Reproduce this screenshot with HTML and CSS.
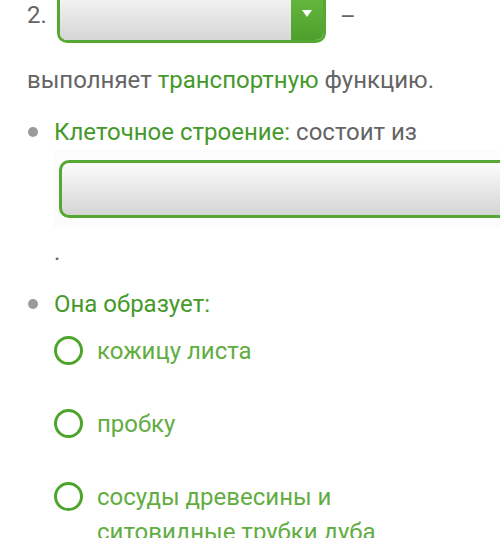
FILE: index.html
```html
<!DOCTYPE html>
<html>
<head>
	<meta charset="UTF-8">
	<title>Ткани растений</title>
	<link rel="stylesheet" href="styles.css">
</head>
<body>
	<div class="warp">
		<div class="q-row">
			<span class="num">2.</span>
			<div class="sel">
				<div class="sel-box"></div>
				<div class="sel-btn"><span class="arr"></span></div>
			</div>
			<span class="dash">–</span>
		</div>
		<p class="txt">выполняет <span class="grn">транспортную</span> функцию.</p>

		<ul class="list">
			<li>
				<p class="txt"><span class="grn">Клеточное строение:</span> состоит из</p>
				<div class="inp-wrap">
					<div class="inp"></div>
				</div>
				<p class="txt dot">.</p>
			</li>
			<li>
				<p class="txt"><span class="grn">Она образует:</span></p>
				<div class="radios">
					<label class="rad"><span class="circ"></span><span class="lbl">кожицу листа</span></label>
					<label class="rad"><span class="circ"></span><span class="lbl">пробку</span></label>
					<label class="rad"><span class="circ"></span><span class="lbl">сосуды древесины и ситовидные трубки дуба</span></label>
				</div>
			</li>
		</ul>
	</div>
</body>
</html>
```
FILE: styles.css
```css
body{
	margin: 0;
	font-family: Roboto, 'Noto Sans', sans-serif;
	font-size: 24px;
	color: #646464;
	background: #fff;
	overflow: hidden;
}
.warp{
	padding-left: 27px;
}
.q-row{
	display: flex;
	align-items: center;
	height: 60px;
	margin-top: -17px;
}
.num{
	width: 30px;
	line-height: 36px;
	margin-top: 4px;
}
.sel{
	display: flex;
	width: 269px;
	height: 60px;
	box-sizing: border-box;
	border: 3px solid #55a834;
	border-radius: 10px;
	overflow: hidden;
}
.sel-box{
	flex: 1;
	background: linear-gradient(#fbfbfb, #d6d6d6);
}
.sel-btn{
	width: 32px;
	display: flex;
	justify-content: center;
	padding-top: 24px;
	box-sizing: border-box;
	background: linear-gradient(#6abd43, #4f9f2c);
}
.arr{
	width: 0;
	height: 0;
	border-left: 5px solid transparent;
	border-right: 5px solid transparent;
	border-top: 7px solid #fff;
}
.dash{
	margin-left: 14px;
	line-height: 36px;
	margin-top: 8px;
}
.txt{
	margin: 0;
	line-height: 36px;
}
.q-row + .txt{
	margin-top: 19px;
}
.grn{
	color: #45992a;
}
.list{
	margin: 16px 0 0;
	padding: 0;
	list-style: none;
}
.list li{
	position: relative;
	padding-left: 27px;
	margin-bottom: 16px;
}
.list li::before{
	content: '';
	position: absolute;
	left: 1px;
	top: 13px;
	width: 10px;
	height: 10px;
	border-radius: 50%;
	background: #9a9a9a;
}
.inp-wrap{
	margin: 0 -27px 0 -1px;
	padding: 10px 0 10px 6px;
	background: #fcfcfc;
}
.inp{
	height: 58px;
	margin-right: -40px;
	box-sizing: border-box;
	border: 3px solid #55a834;
	border-radius: 10px;
	background: linear-gradient(#fcfcfc, #d5d5d5);
}
.txt.dot{
	margin-top: 6px;
	line-height: 36px;
}
.radios{
	display: flex;
	flex-direction: column;
	gap: 38px;
	margin-top: 12px;
}
.rad{
	display: flex;
	align-items: flex-start;
	cursor: pointer;
}
.circ{
	flex: none;
	width: 29px;
	height: 29px;
	box-sizing: border-box;
	border: 3px solid #4ea52c;
	border-radius: 50%;
	margin: 2px 14px 0 0;
}
.lbl{
	max-width: 320px;
	line-height: 35px;
	color: #62ad42;
}
```
